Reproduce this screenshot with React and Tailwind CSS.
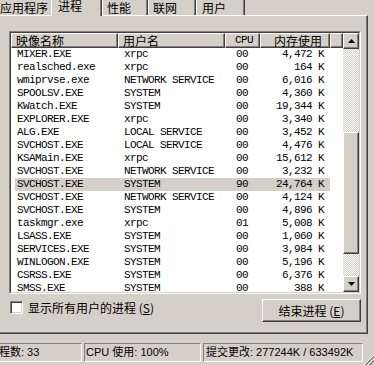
import React from 'react';

const rows = [
  ['MIXER.EXE', 'xrpc', '00', '4,472 K'],
  ['realsched.exe', 'xrpc', '00', '164 K'],
  ['wmiprvse.exe', 'NETWORK SERVICE', '00', '6,016 K'],
  ['SPOOLSV.EXE', 'SYSTEM', '00', '4,360 K'],
  ['KWatch.EXE', 'SYSTEM', '00', '19,344 K'],
  ['EXPLORER.EXE', 'xrpc', '00', '3,340 K'],
  ['ALG.EXE', 'LOCAL SERVICE', '00', '3,452 K'],
  ['SVCHOST.EXE', 'LOCAL SERVICE', '00', '4,476 K'],
  ['KSAMain.EXE', 'xrpc', '00', '15,612 K'],
  ['SVCHOST.EXE', 'NETWORK SERVICE', '00', '3,232 K'],
  ['SVCHOST.EXE', 'SYSTEM', '90', '24,764 K'],
  ['SVCHOST.EXE', 'NETWORK SERVICE', '00', '4,124 K'],
  ['SVCHOST.EXE', 'SYSTEM', '00', '4,896 K'],
  ['taskmgr.exe', 'xrpc', '01', '5,008 K'],
  ['LSASS.EXE', 'SYSTEM', '00', '1,060 K'],
  ['SERVICES.EXE', 'SYSTEM', '00', '3,984 K'],
  ['WINLOGON.EXE', 'SYSTEM', '00', '5,196 K'],
  ['CSRSS.EXE', 'SYSTEM', '00', '6,376 K'],
  ['SMSS.EXE', 'SYSTEM', '00', '388 K'],
];

const selectedRow = 10;

const mono = "font-['Liberation_Mono','Noto_Sans_CJK_SC',monospace] text-[11px] tracking-[-0.6px]";
const raised = 'border border-t-white border-l-white border-b-[#404040] border-r-[#404040] shadow-[inset_-1px_-1px_0_#808080]';
const headerCell = 'h-[15px] flex items-center border-t border-l border-t-white border-l-white border-r border-r-[#404040] shadow-[inset_-1px_-1px_0_#808080] border-b border-b-[#404040]';

const Arrow = ({ down }) => (
  <svg width="7" height="4" viewBox="0 0 7 4">
    {down ? <polygon points="0,0 7,0 3.5,4" fill="#000" /> : <polygon points="3.5,0 7,4 0,4" fill="#000" />}
  </svg>
);

const App = () => {
  return (
    <div className="w-[374px] h-[365px] overflow-hidden relative bg-[#d4d0c8] text-black text-[12px] leading-none font-['Liberation_Sans','Noto_Sans_CJK_SC',sans-serif]">
      {/* tabs */}
      <div className="flex h-[15px] font-['Noto_Sans_CJK_SC',sans-serif]">
        <div className="-ml-[4px] w-[55px] h-[15px] border-l border-white pl-[3px] pt-[2px]">应用程序</div>
        <div className="relative z-10 w-[51px] h-[16px] bg-[#d4d0c8] border-l border-white border-r border-r-[#404040] shadow-[inset_-1px_0_0_#808080] pl-[6px] pt-0">进程</div>
        <div className="w-[46px] h-[15px] border-l border-white border-r border-r-[#404040] shadow-[inset_-1px_0_0_#808080] pl-[4px] pt-[2px]">性能</div>
        <div className="w-[48px] h-[15px] border-l border-white border-r border-r-[#404040] shadow-[inset_-1px_0_0_#808080] pl-[4px] pt-[2px]">联网</div>
        <div className="w-[49px] h-[15px] border-l border-white border-r border-r-[#404040] shadow-[inset_-1px_0_0_#808080] pl-[5px] pt-[2px]">用户</div>
      </div>

      {/* tab panel */}
      <div className="-ml-[3px] w-[371px] h-[319px] border-t border-l border-white border-r border-r-[#404040] border-b border-b-[#404040] shadow-[inset_-1px_-1px_0_#808080]">
        {/* list view */}
        <div className="mt-[15px] ml-[11px] w-[352px] h-[263px] border border-t-[#808080] border-l-[#808080] border-b-white border-r-white">
          <div className="w-full h-full flex border border-t-[#404040] border-l-[#404040] border-b-[#d4d0c8] border-r-[#d4d0c8] bg-white">
            <div className="w-[332px] flex flex-col">
              <div className="flex bg-[#d4d0c8] font-['Noto_Sans_CJK_SC',sans-serif]">
                <div className={`${headerCell} w-[107px] pl-[4px]`}>映像名称</div>
                <div className={`${headerCell} w-[107px] pl-[4px]`}>用户名</div>
                <div className={`${headerCell} w-[35px] justify-end pr-[6px] ${mono}`}>CPU</div>
                <div className={`${headerCell} w-[70px] justify-end pr-[7px]`}>内存使用</div>
                <div className={`${headerCell} w-[13px]`}></div>
              </div>
              <div className={`h-[244px] overflow-hidden ${mono}`}>
                {rows.map((r, i) => (
                  <div key={i} className="h-[13px] pl-[4px] flex">
                    <div className={`flex h-[13px] items-center ${i === selectedRow ? 'bg-[#d4d0c8]' : ''}`}>
                      <div className="w-[103px] pl-[2px] whitespace-nowrap">{r[0]}</div>
                      <div className="w-[107px] pl-[6px] whitespace-nowrap">{r[1]}</div>
                      <div className="w-[35px] pl-[11px]">{r[2]}</div>
                      <div className="w-[70px] pr-[6px] text-right whitespace-nowrap">{r[3]}</div>
                    </div>
                  </div>
                ))}
              </div>
            </div>
            {/* scrollbar */}
            <div className="w-[16px] flex flex-col bg-[image:repeating-conic-gradient(#d4d0c8_0_25%,#ffffff_0_50%)] bg-[length:2px_2px]">
              <div className={`h-[16px] bg-[#d4d0c8] flex items-center justify-center ${raised}`}>
                <Arrow />
              </div>
              <div className="h-[83px]"></div>
              <div className={`h-[122px] bg-[#d4d0c8] ${raised}`}></div>
              <div className="flex-1"></div>
              <div className={`h-[16px] bg-[#d4d0c8] flex items-center justify-center ${raised}`}>
                <Arrow down />
              </div>
            </div>
          </div>
        </div>

        {/* checkbox + end process */}
        <div className="mt-[5px] ml-[11px] w-[352px] flex justify-between items-start font-['Noto_Sans_CJK_SC',sans-serif]">
          <div className="mt-[2px] ml-[1px] flex items-center">
            <div className="w-[13px] h-[13px] bg-white border border-t-[#808080] border-l-[#808080] border-b-white border-r-white shadow-[inset_1px_1px_0_#404040,inset_-1px_-1px_0_#d4d0c8]"></div>
            <span className="ml-[5px]">显示所有用户的进程 (<span className="underline">S</span>)</span>
          </div>
          <button className={`w-[99px] h-[23px] bg-[#d4d0c8] flex items-center justify-center ${raised}`}>
            结束进程 (<span className="underline">E</span>)
          </button>
        </div>
      </div>

      {/* status bar */}
      <div className="mt-[9px] flex gap-[2px] h-[19px] text-[11px]">
        <div className="-ml-[15px] w-[97px] h-full flex items-center pl-[2px] border border-t-[#808080] border-l-[#808080] border-b-white border-r-white whitespace-nowrap">进程数: 33</div>
        <div className="w-[117px] h-full flex items-center pl-[1px] border border-t-[#808080] border-l-[#808080] border-b-white border-r-white whitespace-nowrap">CPU 使用: 100%</div>
        <div className="w-[160px] h-full flex items-center pl-[2px] border border-t-[#808080] border-l-[#808080] border-b-white border-r-white whitespace-nowrap">提交更改: 277244K / 633492K</div>
      </div>

      {/* size grip */}
      <svg className="absolute right-0 bottom-0" width="11" height="11" viewBox="0 0 11 11">
        <line x1="11" y1="1" x2="1" y2="11" stroke="#fff" />
        <line x1="11" y1="2" x2="2" y2="11" stroke="#808080" />
        <line x1="11" y1="3" x2="3" y2="11" stroke="#808080" />
        <line x1="11" y1="5" x2="5" y2="11" stroke="#fff" />
        <line x1="11" y1="6" x2="6" y2="11" stroke="#808080" />
        <line x1="11" y1="7" x2="7" y2="11" stroke="#808080" />
      </svg>
    </div>
  );
};

export default App;
